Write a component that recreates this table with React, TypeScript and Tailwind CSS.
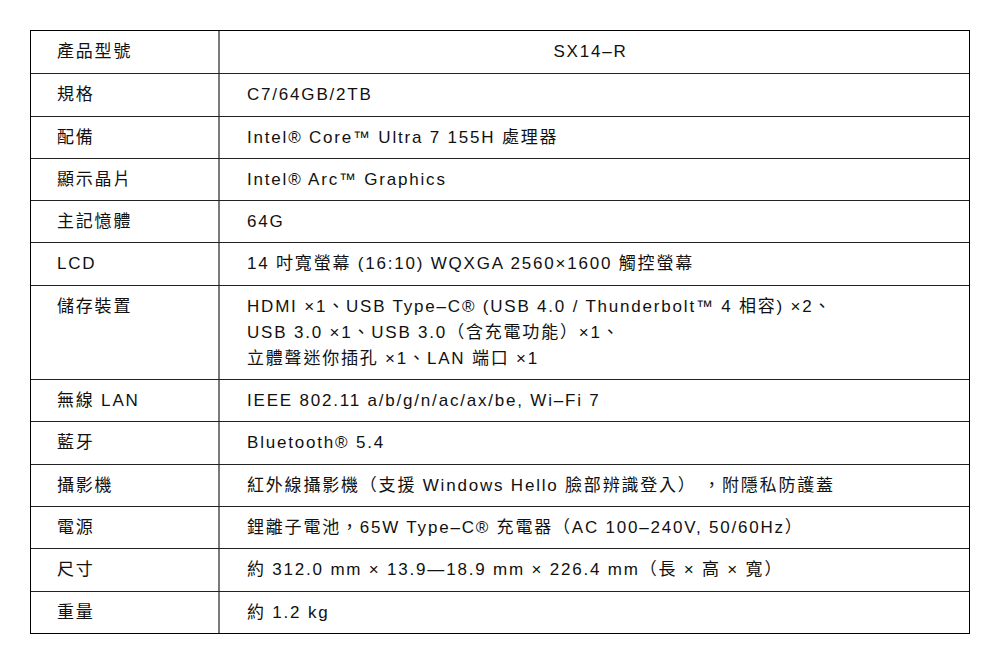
import React from "react";

interface SpecRow {
  label: string;
  lines: string[];
  center?: boolean;
}

const rows: SpecRow[] = [
  { label: "產品型號", lines: ["SX14–R"], center: true },
  { label: "規格", lines: ["C7/64GB/2TB"] },
  { label: "配備", lines: ["Intel® Core™ Ultra 7 155H 處理器"] },
  { label: "顯示晶片", lines: ["Intel® Arc™ Graphics"] },
  { label: "主記憶體", lines: ["64G"] },
  { label: "LCD", lines: ["14 吋寬螢幕 (16:10) WQXGA 2560×1600 觸控螢幕"] },
  {
    label: "儲存裝置",
    lines: [
      "HDMI ×1、USB Type–C® (USB 4.0 / Thunderbolt™ 4 相容) ×2、",
      "USB 3.0 ×1、USB 3.0（含充電功能）×1、",
      "立體聲迷你插孔 ×1、LAN 端口 ×1",
    ],
  },
  { label: "無線 LAN", lines: ["IEEE 802.11 a/b/g/n/ac/ax/be, Wi–Fi 7"] },
  { label: "藍牙", lines: ["Bluetooth® 5.4"] },
  { label: "攝影機", lines: ["紅外線攝影機（支援 Windows Hello 臉部辨識登入） ，附隱私防護蓋"] },
  { label: "電源", lines: ["鋰離子電池，65W Type–C® 充電器（AC 100–240V, 50/60Hz）"] },
  { label: "尺寸", lines: ["約 312.0 mm × 13.9—18.9 mm × 226.4 mm（長 × 高 × 寬）"] },
  { label: "重量", lines: ["約 1.2 kg"] },
];

export default function App() {
  return (
    <div className="w-[1000px] h-[663px] bg-white pt-[30px] pl-[30px] font-['Liberation_Sans','Noto_Sans_CJK_TC',sans-serif] text-[17px] tracking-[1.8px] text-[#111]">
      <div className="w-[940px] border border-black">
        {rows.map((row, i) => (
          <div
            key={row.label}
            className={`flex ${row.lines.length > 1 ? "h-[94.3px]" : "h-[42.3px]"} ${
              i > 0 ? "border-t border-[#222]" : ""
            }`}
          >
            {/* label */}
            <div className="w-[187px] shrink-0 pl-[26px] pt-[8px] leading-[26px] whitespace-pre">
              {row.label}
            </div>
            <div className="w-[2px] shrink-0 bg-[#7a7a7a]" />
            {/* value */}
            <div
              className={`flex-1 pt-[8px] leading-[26px] whitespace-pre ${
                row.center ? "text-center pr-[8px]" : "pl-[27px]"
              }`}
            >
              {row.lines.map((line) => (
                <div key={line} className="h-[26px]">
                  {line}
                </div>
              ))}
            </div>
          </div>
        ))}
      </div>
    </div>
  );
}
